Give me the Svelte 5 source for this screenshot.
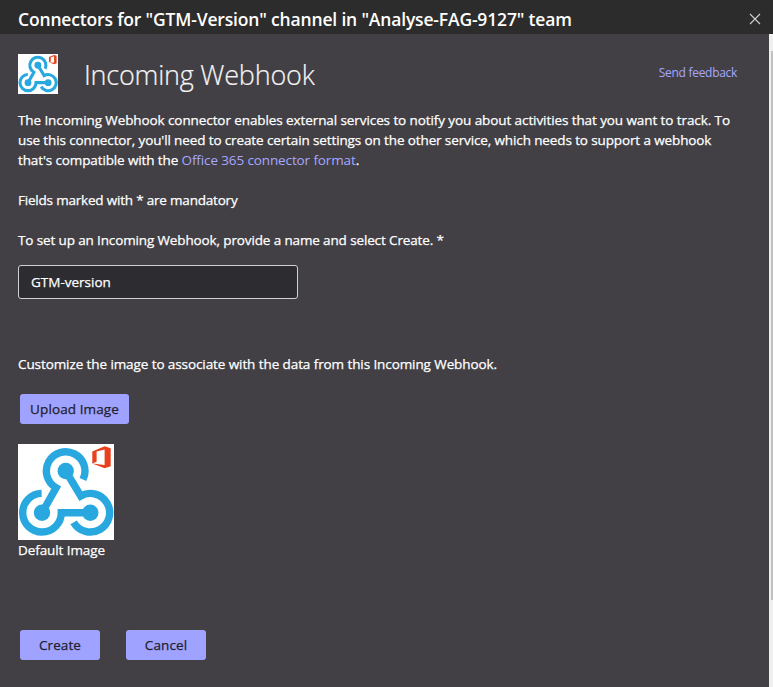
<script>
  let name = $state('GTM-version');
</script>

{#snippet logo(size)}
  <svg class="logo" width={size} height={size} viewBox="0 0 96 96" aria-hidden="true">
    <rect width="96" height="96" fill="#fff" />
    <g fill="none" stroke="#29a8e0" stroke-width="7.4">
      <path d="M65 35.5A19.3 19.3 0 1 0 38.1 43.8L24 68.7" />
      <path d="M23.6 49.4A19.3 19.3 0 1 0 43.3 68.7H72.3" />
      <path d="M55.6 78.3A19.3 19.3 0 1 0 62.7 52L47.7 27" />
    </g>
    <g fill="#29a8e0">
      <circle cx="47.7" cy="27" r="8.2" />
      <circle cx="24" cy="68.7" r="8.2" />
      <circle cx="72.3" cy="68.7" r="8.2" />
    </g>
    <path fill="#e8401c" fill-rule="evenodd" d="M74.3 7.4 86.6 2.3 92.7 4.2V22.3L86.6 24.3 74.3 19.5 86.6 21V5.6L78.6 7.6V17.7L74.3 19.5Z" />
  </svg>
{/snippet}

<div class="dialog">
  <header>
    <h1>Connectors for "GTM-Version" channel in "Analyse-FAG-9127" team</h1>
    <button class="close" aria-label="Close">
      <svg width="12" height="12" viewBox="0 0 12 12"><path d="M1 1 11 11M11 1 1 11" stroke="#d0d0d0" stroke-width="1.1" /></svg>
    </button>
  </header>
  <div class="body">
    <main>
      <div class="top">
        {@render logo(40)}
        <h2>Incoming Webhook</h2>
        <a class="feedback" href="#feedback">Send feedback</a>
      </div>
      <p class="intro">
        <span class="l1">The Incoming Webhook connector enables external services to notify you about activities that you want to track. To</span><br />
        <span class="l2">use this connector, you'll need to create certain settings on the other service, which needs to support a webhook</span><br />
        <span class="l3">that's compatible with the <a href="#format">Office 365 connector format</a>.</span>
      </p>
      <p class="mandatory">Fields marked with * are mandatory</p>
      <label for="name">To set up an Incoming Webhook, provide a name and select Create. *</label>
      <input id="name" bind:value={name} />
      <p class="customize">Customize the image to associate with the data from this Incoming Webhook.</p>
      <button class="btn upload">Upload Image</button>
      <figure>
        {@render logo(96)}
        <figcaption>Default Image</figcaption>
      </figure>
      <div class="actions">
        <button class="btn">Create</button>
        <button class="btn">Cancel</button>
      </div>
    </main>
    <div class="scroll"><div class="thumb"></div></div>
  </div>
</div>

<style>
  :global(body) { margin: 0; }
  .dialog {
    width: 773px; height: 687px; display: flex; flex-direction: column; overflow: hidden;
    background: #424045; color: #fff;
    font: 400 13.5px/20px "Open Sans", "Noto Sans", sans-serif;
    letter-spacing: -0.09px;
    -webkit-text-stroke: 0.25px currentColor;
  }
  header {
    height: 34px; flex: none; box-sizing: border-box; padding: 4px 12px 0 18px;
    display: flex; align-items: center; justify-content: space-between; background: #2d2c2c;
  }
  h1 {
    margin: 0; font-size: 17.5px; line-height: 24px; font-weight: 600;
    letter-spacing: -0.17px; white-space: nowrap; -webkit-text-stroke: 0;
  }
  button { font: inherit; letter-spacing: inherit; border: 0; padding: 0; }
  .close { display: flex; width: 12px; height: 12px; background: none; }
  .body { flex: 1; display: flex; }
  main { flex: 1; padding: 20px 32px 0 18px; display: flex; flex-direction: column; align-items: flex-start; }
  .logo { display: block; flex: none; }
  .top { display: flex; align-self: stretch; height: 40px; margin-bottom: 16px; }
  h2 {
    margin: 0 0 0 26px; font-size: 27px; line-height: 42px; font-weight: 300; color: #f4f4f4;
    letter-spacing: -0.22px; white-space: nowrap; -webkit-text-stroke: 0.2px currentColor;
  }
  a { color: #a6a7ff; text-decoration: none; -webkit-text-stroke: 0; }
  .feedback { margin-left: auto; font-size: 12px; line-height: 38px; letter-spacing: -0.3px; }
  p { margin: 0; white-space: nowrap; }
  .l2 { letter-spacing: -0.12px; }
  .l3 { letter-spacing: -0.12px; }
  .mandatory { margin-top: 20px; letter-spacing: -0.2px; }
  label { margin-top: 20px; letter-spacing: -0.13px; white-space: nowrap; }
  input {
    box-sizing: border-box; width: 280px; height: 34px; margin: 15px 0 0; padding: 1px 12px;
    border: 1px solid #d2d0d2; border-radius: 3px; background: #2d2c30; color: #fff; font: inherit; outline: 0;
  }
  .customize { margin-top: 55px; }
  .btn { width: 80px; height: 30px; border-radius: 3px; background: #a0a2ff; color: #201f2c; letter-spacing: 0.1px; white-space: nowrap; }
  .upload { width: 109px; margin: 20px 0 0 2px; }
  figure { margin: 20px 0 0; }
  .actions { display: flex; gap: 26px; margin: 70px 0 0 2px; }
  .scroll { width: 4px; box-sizing: border-box; padding: 17px 0 0 2px; background: #f0f0f0; }
  .thumb { height: 549px; background: #c1c1c1; }
</style>
